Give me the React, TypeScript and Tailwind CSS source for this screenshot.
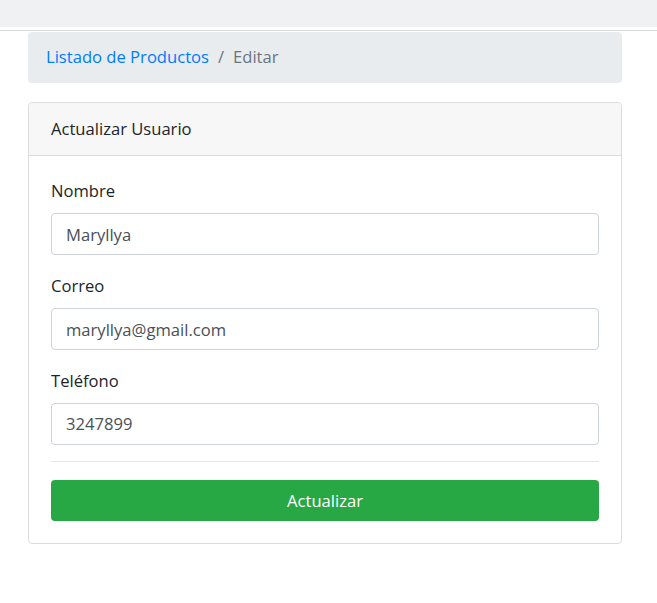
import React from "react";

const FIELDS = [
  { label: "Nombre", value: "Maryllya" },
  { label: "Correo", value: "maryllya@gmail.com" },
  { label: "Teléfono", value: "3247899" },
];

export default function App() {
  return (
    <div
      className="min-h-[603px] bg-white text-[16.6px] leading-[26.4px] text-[#212529]"
      style={{ fontFamily: '"Open Sans", "Noto Sans", sans-serif' }}
    >
      {/* Top navbar remnant */}
      <div className="h-[27px] bg-[#f0f1f3]" />
      <div className="h-[3px]" />
      <div className="h-px bg-[#dcdcdc]" />

      <div className="ml-[28px] w-[594px] pt-px">
        {/* Breadcrumb */}
        <nav className="flex items-center h-[51px] px-[18px] rounded-[4px] bg-[#e9ecef]">
          <span className="text-[#007bff]">Listado de Productos</span>
          <span className="px-[9px] text-[#6c757d]">/</span>
          <span className="text-[#6c757d]">Editar</span>
        </nav>

        {/* Card */}
        <div className="mt-[19px] border border-[#dcdcdc] rounded-[4px] bg-white">
          <div className="h-[53px] flex items-center px-[22px] bg-[#f7f7f7] border-b border-[#dcdcdc] rounded-t-[4px]">
            Actualizar Usuario
          </div>
          <div className="p-[22px]">
            {FIELDS.map((f) => (
              <div key={f.label} className="mb-[17.6px]">
                <label className="block mb-[8.8px]">{f.label}</label>
                <input
                  readOnly
                  value={f.value}
                  className="block w-full h-[42px] px-[14px] border border-[#ced4da] rounded-[4px] text-[#495057] outline-none bg-white"
                />
              </div>
            ))}
            <hr className="border-t border-[#e5e5e5] mb-[18px] -mt-px" />
            <button className="w-full h-[41px] rounded-[4px] bg-[#28a745] text-white">
              Actualizar
            </button>
          </div>
        </div>
      </div>
    </div>
  );
}
